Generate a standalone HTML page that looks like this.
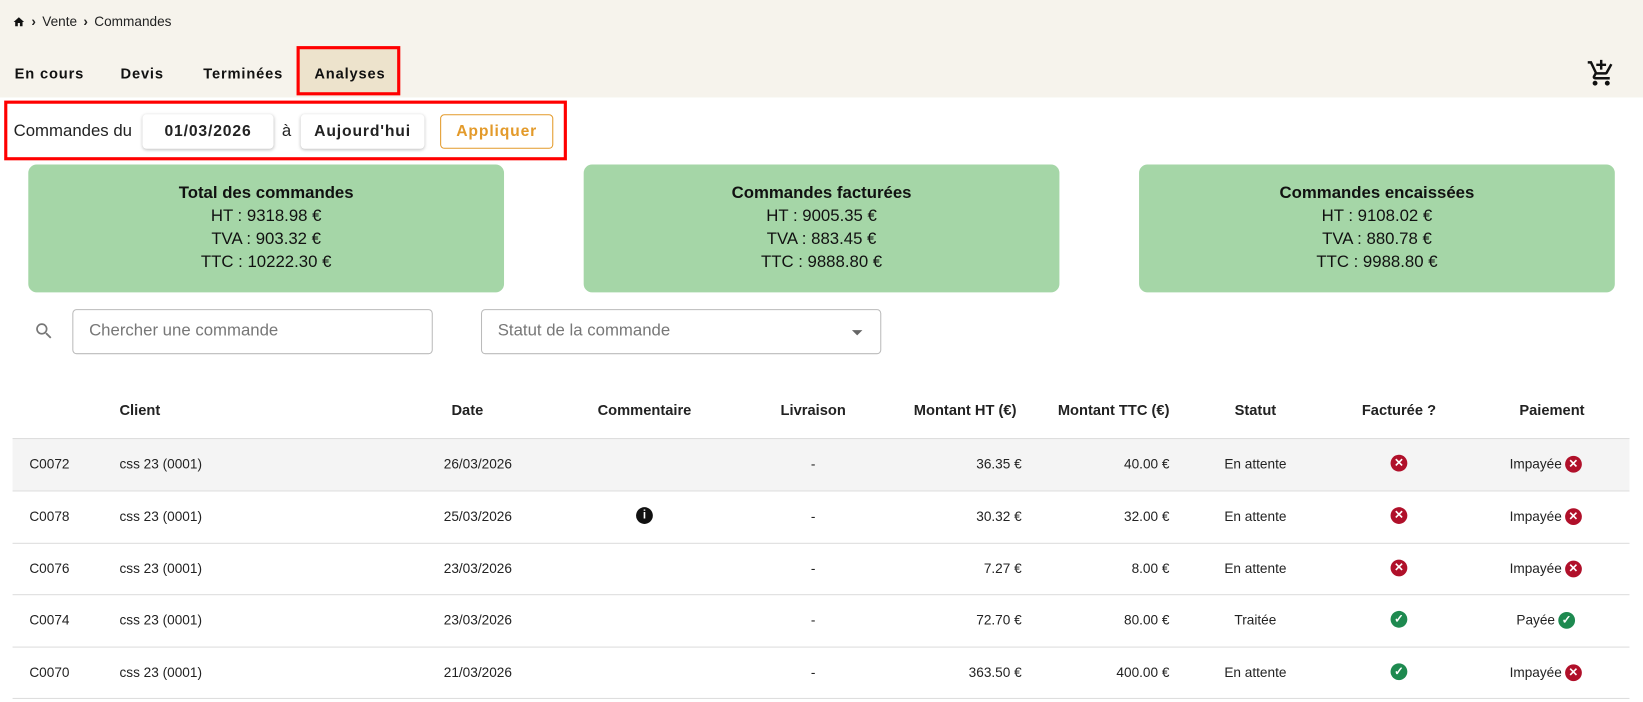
<!DOCTYPE html>
<html><head><meta charset="utf-8"><style>
*{box-sizing:border-box;margin:0;padding:0}
body{width:1643px;height:701px;overflow:hidden;background:#fff;font-family:"Liberation Sans",sans-serif;color:#222;position:relative}
#w{position:absolute;left:0;top:0;width:1568px;height:670px;transform:scale(1.0479);transform-origin:0 0}
.hdr{position:absolute;left:0;top:0;width:1568px;height:93px;background:#f6f3ec}
.abs{position:absolute}
.crumb{top:13px;left:12px;font-size:13px;display:flex;align-items:center;gap:6px}
.tab{top:62px;font-size:14px;font-weight:bold;letter-spacing:.8px;color:#111}
.atab{left:283px;top:44px;width:99px;height:47px;background:#ede3cc;border:3px solid #f00}
.fbox{left:4px;top:96px;width:537px;height:57px;border:3px solid #f00}
.btn{top:109px;height:33px;background:#fff;border-radius:4px;box-shadow:0 1px 3px rgba(0,0,0,.25);font-size:15px;font-weight:bold;letter-spacing:.8px;display:flex;align-items:center;justify-content:center}
.card{top:157px;width:454px;height:122px;background:#a5d6a7;border-radius:8px;text-align:center;font-size:16px;line-height:22px;padding-top:17px;color:#111}
.card b{display:block}
.inp{top:295px;height:43px;border:1px solid #bbb;border-radius:4px;font-size:16px;color:#777;padding:11px 15px}
.th{top:383px;font-size:14px;font-weight:bold;color:#222}
.row{position:absolute;left:12px;width:1543px;height:50px;border-top:1px solid #ddd;font-size:13px}
.row span{position:absolute;top:15px;line-height:18px;display:flex;align-items:center;gap:3px}
.c{transform:translateX(-50%);white-space:nowrap}
.r{transform:translateX(-100%);white-space:nowrap}
.ic{display:inline-block;width:16px;height:16px;border-radius:50%;color:#fff;font-size:11px;line-height:16px;text-align:center;font-weight:bold;font-style:normal}
.x{background:#b0102a}.ok{background:#1e8a50}
</style></head><body><div id="w">
<div class="hdr"></div>
<div class="abs crumb"><svg width="12" height="12" viewBox="0 0 24 24"><path d="M10 20v-6h4v6h5v-8h3L12 3 2 12h3v8z" fill="#111"/></svg><span style="font-weight:bold">›</span><span>Vente</span><span style="font-weight:bold">›</span><span>Commandes</span></div>
<div class="abs atab"></div>
<div class="abs tab" style="left:14px">En cours</div>
<div class="abs tab" style="left:115px">Devis</div>
<div class="abs tab" style="left:194px">Terminées</div>
<div class="abs tab" style="left:300px">Analyses</div>
<svg class="abs" style="left:1514px;top:56px" width="28" height="28" viewBox="0 0 24 24"><path d="M11 9h2V6h3V4h-3V1h-2v3H8v2h3zm-4 9c-1.1 0-2 .9-2 2s.9 2 2 2 2-.9 2-2-.9-2-2-2zm10 0c-1.1 0-2 .9-2 2s.9 2 2 2 2-.9 2-2-.9-2-2-2zm-9.8-3.2.03-.12.9-1.680h7.45c.75 0 1.41-.41 1.750-1.03l3.86-7.01L19.420 4l-3.87 7H8.53L4.27 2H1v2h2l3.6 7.59-1.35 2.45c-.16.28-.25.61-.25.96 0 1.1.9 2 2 2h12v-2H7.42c-.13 0-.25-.11-.25-.25z" fill="#111"/></svg>
<div class="abs fbox"></div>
<div class="abs" style="left:13px;top:117px;font-size:16px">Commandes du</div>
<div class="abs btn" style="left:136px;width:125px">01/03/2026</div>
<div class="abs" style="left:269px;top:117px;font-size:16px">à</div>
<div class="abs btn" style="left:287px;width:118px">Aujourd'hui</div>
<div class="abs" style="left:420px;top:109px;width:108px;height:33px;border:1px solid #e39a2a;border-radius:4px;color:#e39a2a;font-size:15px;font-weight:bold;letter-spacing:.8px;display:flex;align-items:center;justify-content:center">Appliquer</div>
<div class="abs card" style="left:27px"><b>Total des commandes</b>HT : 9318.98 €<br>TVA : 903.32 €<br>TTC : 10222.30 €</div>
<div class="abs card" style="left:557px"><b>Commandes facturées</b>HT : 9005.35 €<br>TVA : 883.45 €<br>TTC : 9888.80 €</div>
<div class="abs card" style="left:1087px"><b>Commandes encaissées</b>HT : 9108.02 €<br>TVA : 880.78 €<br>TTC : 9988.80 €</div>
<svg class="abs" style="left:32px;top:306px" width="20" height="20" viewBox="0 0 24 24"><path d="M15.5 14h-.79l-.28-.27A6.47 6.47 0 0 0 16 9.5 6.5 6.5 0 1 0 9.5 16c1.61 0 3.09-.59 4.230-1.57l.27.28v.79l5 4.99L20.49 19zm-6 0C7.01 14 5 11.99 5 9.5S7.01 5 9.5 5 14 7.01 14 9.5 11.99 14 9.5 14z" fill="#777"/></svg>
<div class="abs inp" style="left:69px;width:344px">Chercher une commande</div>
<div class="abs inp" style="left:459px;width:382px">Statut de la commande</div>
<div class="abs" style="left:813px;top:315px;border-left:5px solid transparent;border-right:5px solid transparent;border-top:5px solid #666"></div>
<div class="abs th" style="left:114px">Client</div>
<div class="abs th c" style="left:446px">Date</div>
<div class="abs th c" style="left:615px">Commentaire</div>
<div class="abs th c" style="left:776px">Livraison</div>
<div class="abs th r" style="left:970px">Montant HT (€)</div>
<div class="abs th r" style="left:1116px">Montant TTC (€)</div>
<div class="abs th c" style="left:1198px">Statut</div>
<div class="abs th c" style="left:1335px">Facturée ?</div>
<div class="abs th c" style="left:1481px">Paiement</div>

<div class="row" style="top:418px;background:#f4f4f4"><span style="left:16px">C0072</span><span style="left:102px">css 23 (0001)</span><span class="c" style="left:444px">26/03/2026</span><span class="c" style="left:764px">-</span><span class="r" style="left:963px">36.35 €</span><span class="r" style="left:1104px">40.00 €</span><span class="c" style="left:1186px">En attente</span><span class="c" style="left:1323px"><i class="ic x">✕</i></span><span class="c" style="left:1463px">Impayée <i class="ic x">✕</i></span></div>
<div class="row" style="top:468px"><span style="left:16px">C0078</span><span style="left:102px">css 23 (0001)</span><span class="c" style="left:444px">25/03/2026</span><span class="c" style="left:603px"><i class="ic" style="background:#111">i</i></span><span class="c" style="left:764px">-</span><span class="r" style="left:963px">30.32 €</span><span class="r" style="left:1104px">32.00 €</span><span class="c" style="left:1186px">En attente</span><span class="c" style="left:1323px"><i class="ic x">✕</i></span><span class="c" style="left:1463px">Impayée <i class="ic x">✕</i></span></div>
<div class="row" style="top:518px"><span style="left:16px">C0076</span><span style="left:102px">css 23 (0001)</span><span class="c" style="left:444px">23/03/2026</span><span class="c" style="left:764px">-</span><span class="r" style="left:963px">7.27 €</span><span class="r" style="left:1104px">8.00 €</span><span class="c" style="left:1186px">En attente</span><span class="c" style="left:1323px"><i class="ic x">✕</i></span><span class="c" style="left:1463px">Impayée <i class="ic x">✕</i></span></div>
<div class="row" style="top:567px"><span style="left:16px">C0074</span><span style="left:102px">css 23 (0001)</span><span class="c" style="left:444px">23/03/2026</span><span class="c" style="left:764px">-</span><span class="r" style="left:963px">72.70 €</span><span class="r" style="left:1104px">80.00 €</span><span class="c" style="left:1186px">Traitée</span><span class="c" style="left:1323px"><i class="ic ok">✓</i></span><span class="c" style="left:1463px">Payée <i class="ic ok">✓</i></span></div>
<div class="row" style="top:617px;border-bottom:1px solid #ddd"><span style="left:16px">C0070</span><span style="left:102px">css 23 (0001)</span><span class="c" style="left:444px">21/03/2026</span><span class="c" style="left:764px">-</span><span class="r" style="left:963px">363.50 €</span><span class="r" style="left:1104px">400.00 €</span><span class="c" style="left:1186px">En attente</span><span class="c" style="left:1323px"><i class="ic ok">✓</i></span><span class="c" style="left:1463px">Impayée <i class="ic x">✕</i></span></div>
</div></body></html>
